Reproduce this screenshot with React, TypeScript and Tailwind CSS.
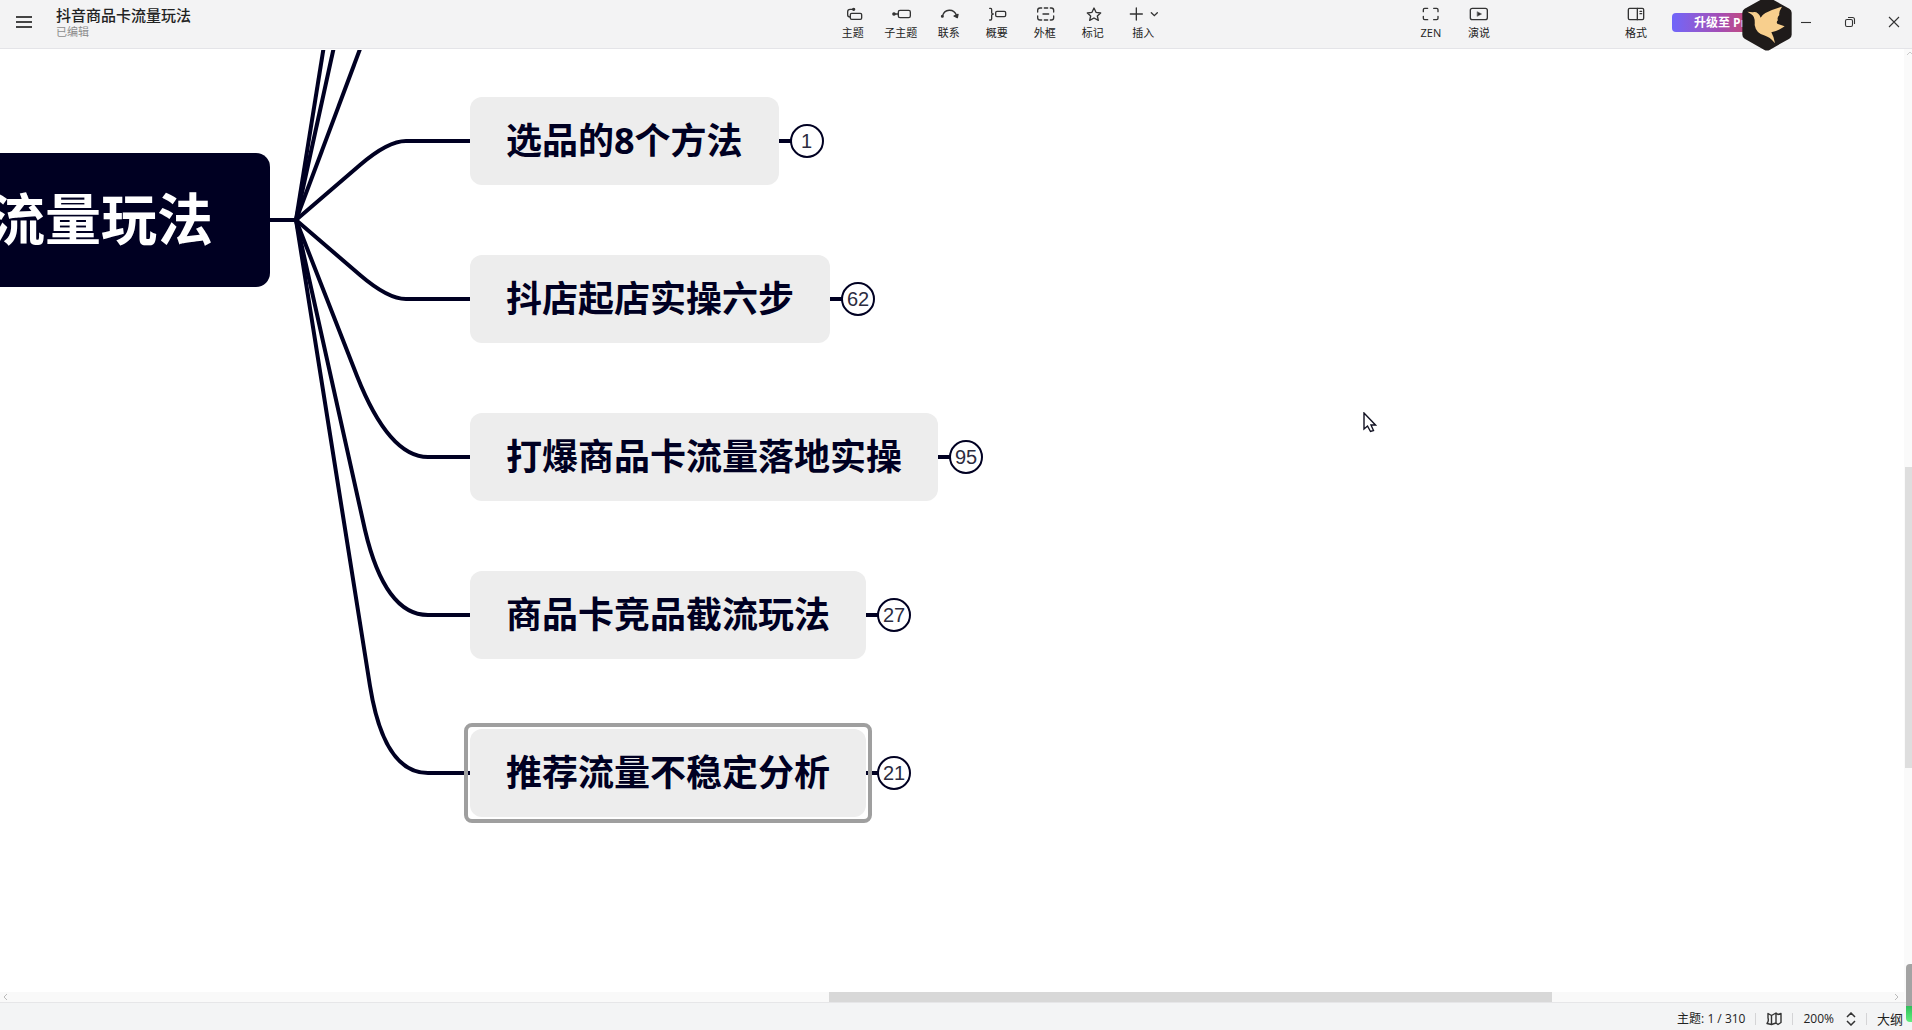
import type { ReactNode } from "react";

// Everything on the canvas is measured from the canvas' own top-left corner.
const INK = "#000022";

const TOPICS = [
  { title: "选品的8个方法", count: 1, top: "top-[47px]", selected: false },
  { title: "抖店起店实操六步", count: 62, top: "top-[205px]", selected: false },
  { title: "打爆商品卡流量落地实操", count: 95, top: "top-[363px]", selected: false },
  { title: "商品卡竞品截流玩法", count: 27, top: "top-[521px]", selected: false },
  { title: "推荐流量不稳定分析", count: 21, top: "top-[679px]", selected: true },
];

// All branches fan out from one joint right of the root topic. The first three
// lead to topics that are scrolled out above.
const BRANCHES = [
  "M296 170L326 -17",
  "M296 170L337 -17",
  "M296 170L366 -17",
  "M296 170L360 115Q388 91 406 91H470",
  "M296 170L360 225Q388 249 406 249H470",
  "M296 170L357 326Q389 407 428 407H470",
  "M296 170L365 480Q385 565 428 565H470",
  "M296 170L370 636Q384 723 428 723H470",
];

export default function App() {
  return (
    <div className="flex h-screen flex-col overflow-hidden bg-white font-['Open_Sans','Noto_Sans_CJK_SC',sans-serif] text-[#222]">
      <Header />
      <div className="flex min-h-0 flex-1">
        <div className="flex min-w-0 flex-1 flex-col">
          <Canvas />
          <HorizontalScroll />
        </div>
        <VerticalScroll />
      </div>
      <StatusBar />
      <div
        aria-hidden
        className="absolute bottom-2 right-0 flex h-[58px] w-[6px] flex-col overflow-hidden rounded-l-sm"
      >
        <span className="flex-[42] bg-[#a3a3a3]" />
        <span className="flex-[16] bg-gradient-to-b from-[#2fc05c] to-[#5fee7c]" />
      </div>
    </div>
  );
}

function Header() {
  return (
    <header className="relative z-10 flex h-[49px] shrink-0 border-b border-[#e4e4e8] bg-[#f3f3f4]">
      <div className="min-w-0 flex-[828]">
        <div className="flex pl-4">
          <button type="button" aria-label="菜单" className="mt-4 h-3 w-4 shrink-0">
            <svg viewBox="0 0 16 12" className="h-3 w-4" stroke="#444" strokeWidth="1.8">
              <path d="M0 1H16M0 6H16M0 11H16" />
            </svg>
          </button>
          <div className="ml-6 min-w-0 pt-[5px]">
            <h1 className="truncate text-[15px] font-medium leading-5">抖音商品卡流量玩法</h1>
            <p className="pt-px text-[11px] leading-3 text-[#8c8c8c]">已编辑</p>
          </div>
        </div>
      </div>

      <nav className="flex">
        <Tool label="主题">
          <rect x="22" y="19" width="34" height="18" rx="4" />
          <path d="M32 7H21Q14 7 14 14V24Q14 30 22 30" />
          <circle cx="32" cy="7" r="3" fill="#333" />
        </Tool>
        <Tool label="子主题">
          <rect x="22" y="10" width="36" height="22" rx="5" />
          <path d="M9 21H22" />
          <circle cx="9" cy="21" r="3.5" fill="#333" />
        </Tool>
        <Tool label="联系">
          <path d="M10 28C16 5 44 3 53 26" />
          <circle cx="10" cy="28" r="2.5" fill="#333" />
          <path d="M45 27L57 22L55 32Z" fill="#333" />
        </Tool>
        <Tool label="概要">
          <path d="M8 4H11Q14 4 14 8V17Q14 21 19 21Q14 21 14 25V35Q14 39 11 39H8" />
          <rect x="26" y="13" width="30" height="16" rx="4" />
        </Tool>
        <Tool label="外框">
          <path d="M20 3H15Q8 3 8 10V15M28 3H38M46 3H49Q56 3 56 10V15M56 27V32Q56 39 49 39H46M38 39H28M20 39H15Q8 39 8 32V27M24 21H41" />
        </Tool>
        <Tool label="标记">
          <path d="M33 3L39 16L53 18L43 27L46 40L33 33L20 40L23 27L13 18L27 16Z" />
        </Tool>
        <button type="button" className="flex w-[53px] flex-col items-center pt-[7px]">
          <svg
            viewBox="0 0 90 42"
            className="h-[14px] w-[30px]"
            fill="none"
            stroke="#333"
            strokeWidth="4"
            strokeLinecap="round"
          >
            <path d="M7 21H43M25 3V39M70 17L79 26L88 17" />
          </svg>
          <span className="mt-1 text-[11px] leading-4">插入</span>
        </button>
      </nav>

      <div className="flex-[237]" />
      <div className="flex">
        <Tool label="ZEN">
          <path d="M20 4H11Q7 4 7 8V14M38 4H47Q51 4 51 8V14M51 28V34Q51 38 47 38H38M20 38H11Q7 38 7 34V28" />
        </Tool>
        <Tool label="演说">
          <rect x="4" y="4" width="51" height="34" rx="6" />
          <path d="M25 14L38 21L25 28Z" fill="#333" strokeWidth="1" />
        </Tool>
      </div>
      <div className="flex-[109]" />
      <Tool label="格式">
        <rect x="7" y="4" width="46" height="34" rx="4" />
        <path d="M34 4V38M42 13H47M42 20H47" />
      </Tool>

      <div className="relative ml-3 w-[112px]">
        <button
          type="button"
          className="mt-[13px] h-[19px] w-24 overflow-hidden whitespace-nowrap rounded bg-gradient-to-r from-[#6f65fa] via-[#a44cb4] to-[#e0343f] pl-[22px] text-left text-xs font-bold leading-[19px] text-white"
        >
          升级至 Pr
        </button>
        <BirdBadge />
      </div>

      <div className="flex">
        <WindowButton label="最小化">
          <path d="M3 8.500H13" />
        </WindowButton>
        <WindowButton label="还原">
          <rect x="3.500" y="5.500" width="7" height="7" rx="1.500" />
          <path d="M6 3.500H10.500Q12.500 3.500 12.500 5.500V10" />
        </WindowButton>
        <WindowButton label="关闭">
          <path d="M3 3L13 13M13 3L3 13" />
        </WindowButton>
      </div>
    </header>
  );
}

function Tool({ label, children }: { label: string; children: ReactNode }) {
  return (
    <button type="button" className="flex w-12 flex-col items-center pt-[7px]">
      <svg
        viewBox="0 0 60 42"
        className="h-[14px] w-5"
        fill="none"
        stroke="#333"
        strokeWidth="4"
        strokeLinecap="round"
        strokeLinejoin="round"
      >
        {children}
      </svg>
      <span className="mt-1 text-[11px] leading-4">{label}</span>
    </button>
  );
}

function WindowButton({ label, children }: { label: string; children: ReactNode }) {
  return (
    <button
      type="button"
      aria-label={label}
      className="flex h-11 w-11 items-center justify-center last:w-10 last:pl-1"
    >
      <svg viewBox="0 0 16 16" className="size-4 shrink-0" fill="none" stroke="#333" strokeWidth="1.1">
        {children}
      </svg>
    </button>
  );
}

// Floats above the title bar and hangs slightly below it.
function BirdBadge() {
  return (
    <svg viewBox="0 0 150 162" className="absolute -top-[3px] left-[70px] h-[54px] w-[50px]" aria-hidden>
      <path
        d="M66 3Q75 -2 84 3L142 35Q149 39 149 47V113Q149 121 142 125L84 158Q75 163 66 158L8 125Q1 121 1 113V47Q1 39 8 35Z"
        fill="#1f1b1a"
      />
      <path
        d="M16 44L32 46Q48 42 56 62Q62 46 120 29Q110 44 112 54Q104 62 108 70Q102 74 106 80L128 88Q112 100 88 106Q96 120 99 139Q84 120 66 115Q42 108 38 84Q40 58 28 52Z"
        fill="#f8cf8d"
      />
    </svg>
  );
}

function Canvas() {
  return (
    <main className="relative mt-px min-h-0 flex-1 overflow-hidden">
      <svg className="absolute left-0 top-0 h-[800px] w-[480px]" fill="none" stroke={INK} strokeWidth="4">
        <path d="M270 170H298" />
        {BRANCHES.map((d) => (
          <path key={d} d={d} />
        ))}
      </svg>

      {/* The root topic runs off the left edge, so its text is anchored right. */}
      <div className="absolute left-0 top-[103px] flex h-[134px] w-[270px] items-center justify-end whitespace-nowrap rounded-r-[14px] bg-[#000022] pb-1 pr-[57px] text-[56px] font-bold leading-none text-white">
        流量玩法
      </div>

      {TOPICS.map((topic) => (
        <div key={topic.title} className={`absolute left-[470px] flex h-[88px] items-center ${topic.top}`}>
          <div className="flex h-full items-center whitespace-nowrap rounded-xl bg-[#ededed] px-9 text-4xl font-bold leading-none text-[#000022]">
            {topic.title}
          </div>
          <span className="h-1 w-3 bg-[#000022]" />
          <button
            type="button"
            className="-ml-px flex size-[34px] items-center justify-center rounded-full border-2 border-[#000022] bg-white font-['Liberation_Sans',sans-serif] text-xl leading-none text-[#2c2c40]"
          >
            {topic.count}
          </button>
          {topic.selected && (
            <span className="pointer-events-none absolute -bottom-[6px] -left-[6px] -top-[6px] right-[39px] rounded-lg border-4 border-[#9f9f9f]" />
          )}
        </div>
      ))}

      <svg viewBox="0 0 14 21" className="absolute left-[1363px] top-[362px] h-[21px] w-[14px]" aria-hidden>
        <path
          d="M1 1V17L4.500 14L7.500 19.500L10.500 18.500L8 13H12.500Z"
          fill="#fff"
          stroke="#111122"
          strokeWidth="1.400"
        />
      </svg>
    </main>
  );
}

function HorizontalScroll() {
  return (
    <div aria-hidden className="relative flex h-[10px] shrink-0 bg-[#f9f9f9]">
      <span className="flex-[829]" />
      <span className="flex-[723] bg-[#d8d8d8]" />
      <span className="flex-[352]" />
      <svg viewBox="0 0 6 8" className="absolute left-[2px] top-px h-2 w-[6px]" fill="none" stroke="#bbb">
        <path d="M5 1L2 4L5 7" />
      </svg>
      <svg viewBox="0 0 6 8" className="absolute right-1 top-px h-2 w-[6px]" fill="none" stroke="#bbb">
        <path d="M1 1L4 4L1 7" />
      </svg>
    </div>
  );
}

function VerticalScroll() {
  return (
    <div aria-hidden className="flex w-2 shrink-0 flex-col bg-[#fafafa] pl-px">
      <svg viewBox="0 0 7 8" className="h-2 w-[7px]" fill="none" stroke="#ccc">
        <path d="M2 6L5 3L8 6" />
      </svg>
      <span className="flex-[410]" />
      <span className="flex-[301] bg-[#dedede]" />
      <span className="flex-[234]" />
    </div>
  );
}

function StatusBar() {
  return (
    <footer className="flex h-7 shrink-0 items-center justify-end gap-[10px] border-t border-[#e6e6e8] bg-[#f3f4f5] pr-[9px] pt-[5px] text-xs leading-5">
      <span>主题: 1 / 310</span>
      <Divider />
      <button type="button" aria-label="导图">
        <svg
          viewBox="0 0 16 14"
          className="h-[14px] w-4"
          fill="none"
          stroke="#333"
          strokeWidth="1.400"
          strokeLinejoin="round"
        >
          <path d="M2 1.500L5.500 3.500L10 1L12 2.500L15 1.500V10.500L12 12.500L10 11L5.500 12.500L1 11.500Q3 9 2 6ZM5.500 3.500V12.500M10 1V11" />
        </svg>
      </button>
      <Divider />
      <button type="button" className="flex items-center gap-3">
        200%
        <svg viewBox="0 0 10 14" className="h-[14px] w-[10px]" fill="none" stroke="#333" strokeWidth="1.500">
          <path d="M1 5L5 1L9 5M1 9L5 13L9 9" />
        </svg>
      </button>
      <Divider />
      <button type="button" className="text-[13px]">
        大纲
      </button>
    </footer>
  );
}

function Divider() {
  return <span className="h-3 w-px bg-[#d4d4d6]" />;
}
